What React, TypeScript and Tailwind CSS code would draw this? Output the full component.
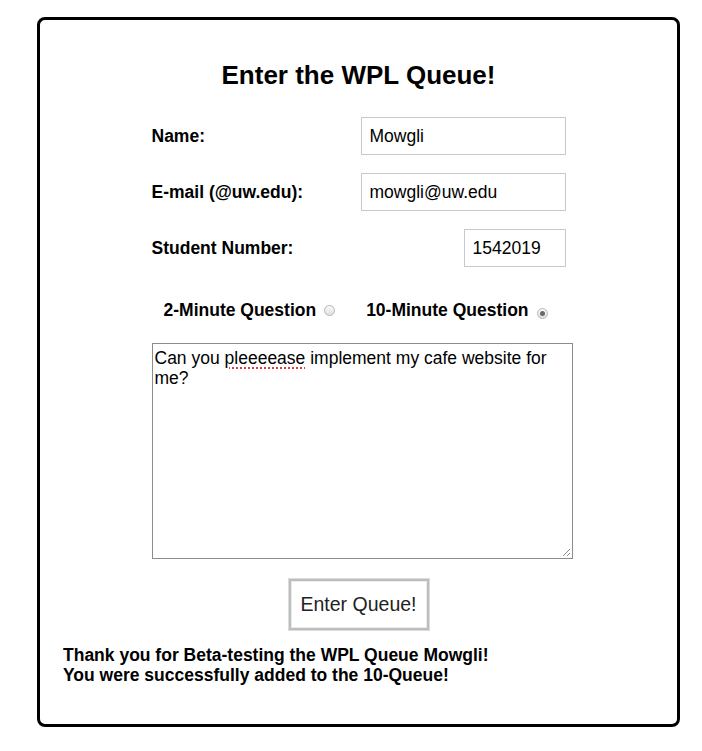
import { useState } from 'react';

const SANS = { fontFamily: '"Liberation Sans", Arial, sans-serif' };

function Radio({ checked }: { checked?: boolean }) {
  return (
    <span className="inline-flex items-center justify-center w-[11px] h-[11px] rounded-full border border-[#b5b5b5] bg-gradient-to-b from-[#fafafa] to-[#e0e0e0]">
      {checked && <span className="w-[5px] h-[5px] rounded-full bg-[#6a6a6a]" />}
    </span>
  );
}

function Row({ label, value, inputWidth }: { label: string; value: string; inputWidth: string }) {
  return (
    <div className="flex items-center justify-between h-[38px]">
      <label className="text-[17.5px] font-bold text-black">{label}</label>
      <div className={`${inputWidth} h-[38px] border border-[#c9c9c9] bg-white pl-[8px] flex items-center text-[17.5px] text-black`}>
        {value}
      </div>
    </div>
  );
}

export default function App() {
  const [name] = useState('Mowgli');

  return (
    <div className="min-h-screen bg-white pt-[17px] pl-[37px]" style={SANS}>
      <div className="w-[643px] h-[710px] border-[3px] border-black rounded-[8px] flex flex-col">
        <h1 className="mt-[40px] text-center text-[26px] leading-[30px] font-bold text-black">Enter the WPL Queue!</h1>

        <div className="w-[414px] mx-auto mt-[27px] flex flex-col">
          <div className="flex flex-col gap-[18px]">
            <Row label="Name:" value={name} inputWidth="w-[205px]" />
            <Row label="E-mail (@uw.edu):" value="mowgli@uw.edu" inputWidth="w-[205px]" />
            <Row label="Student Number:" value="1542019" inputWidth="w-[102px]" />
          </div>

          {/* question length */}
          <div className="mt-[33px] h-[20px] flex items-center pl-[12px] text-[17.5px] font-bold text-black">
            <span>2-Minute Question</span>
            <span className="ml-[8px]"><Radio /></span>
            <span className="ml-[31px]">10-Minute Question</span>
            <span className="ml-[8px]"><Radio checked /></span>
          </div>

          <div
            role="textbox"
            className="relative mt-[23px] w-[421px] h-[216px] border border-[#8c8c8c] bg-white px-[2px] pt-[4px] text-[17.5px] leading-[20px] text-black"
          >
            <div>
              Can you{' '}
              <span className="underline decoration-dotted decoration-[#e23b3b] decoration-2 underline-offset-[3px]">pleeeease</span>{' '}
              implement my cafe website for
            </div>
            <div>me?</div>
            <svg className="absolute right-[1px] bottom-[1px]" width="9" height="9" viewBox="0 0 9 9">
              <line x1="1" y1="8" x2="8" y2="1" stroke="#8a8a8a" strokeWidth="1" />
              <line x1="5" y1="8" x2="8" y2="5" stroke="#8a8a8a" strokeWidth="1" />
            </svg>
          </div>
        </div>

        <button className="mt-[20px] mx-auto w-[140px] h-[51px] border-[2px] border-[#bdbdbd] bg-white text-[19.5px] text-[#222] shadow-[0_0_0_1px_#dcdcdc,inset_0_0_0_1px_#ececec]">
          Enter Queue!
        </button>

        <div className="mt-[15px] pl-[23px] text-[17.5px] leading-[20px] font-bold text-black">
          <p>Thank you for Beta-testing the WPL Queue Mowgli!</p>
          <p>You were successfully added to the 10-Queue!</p>
        </div>
      </div>
    </div>
  );
}
